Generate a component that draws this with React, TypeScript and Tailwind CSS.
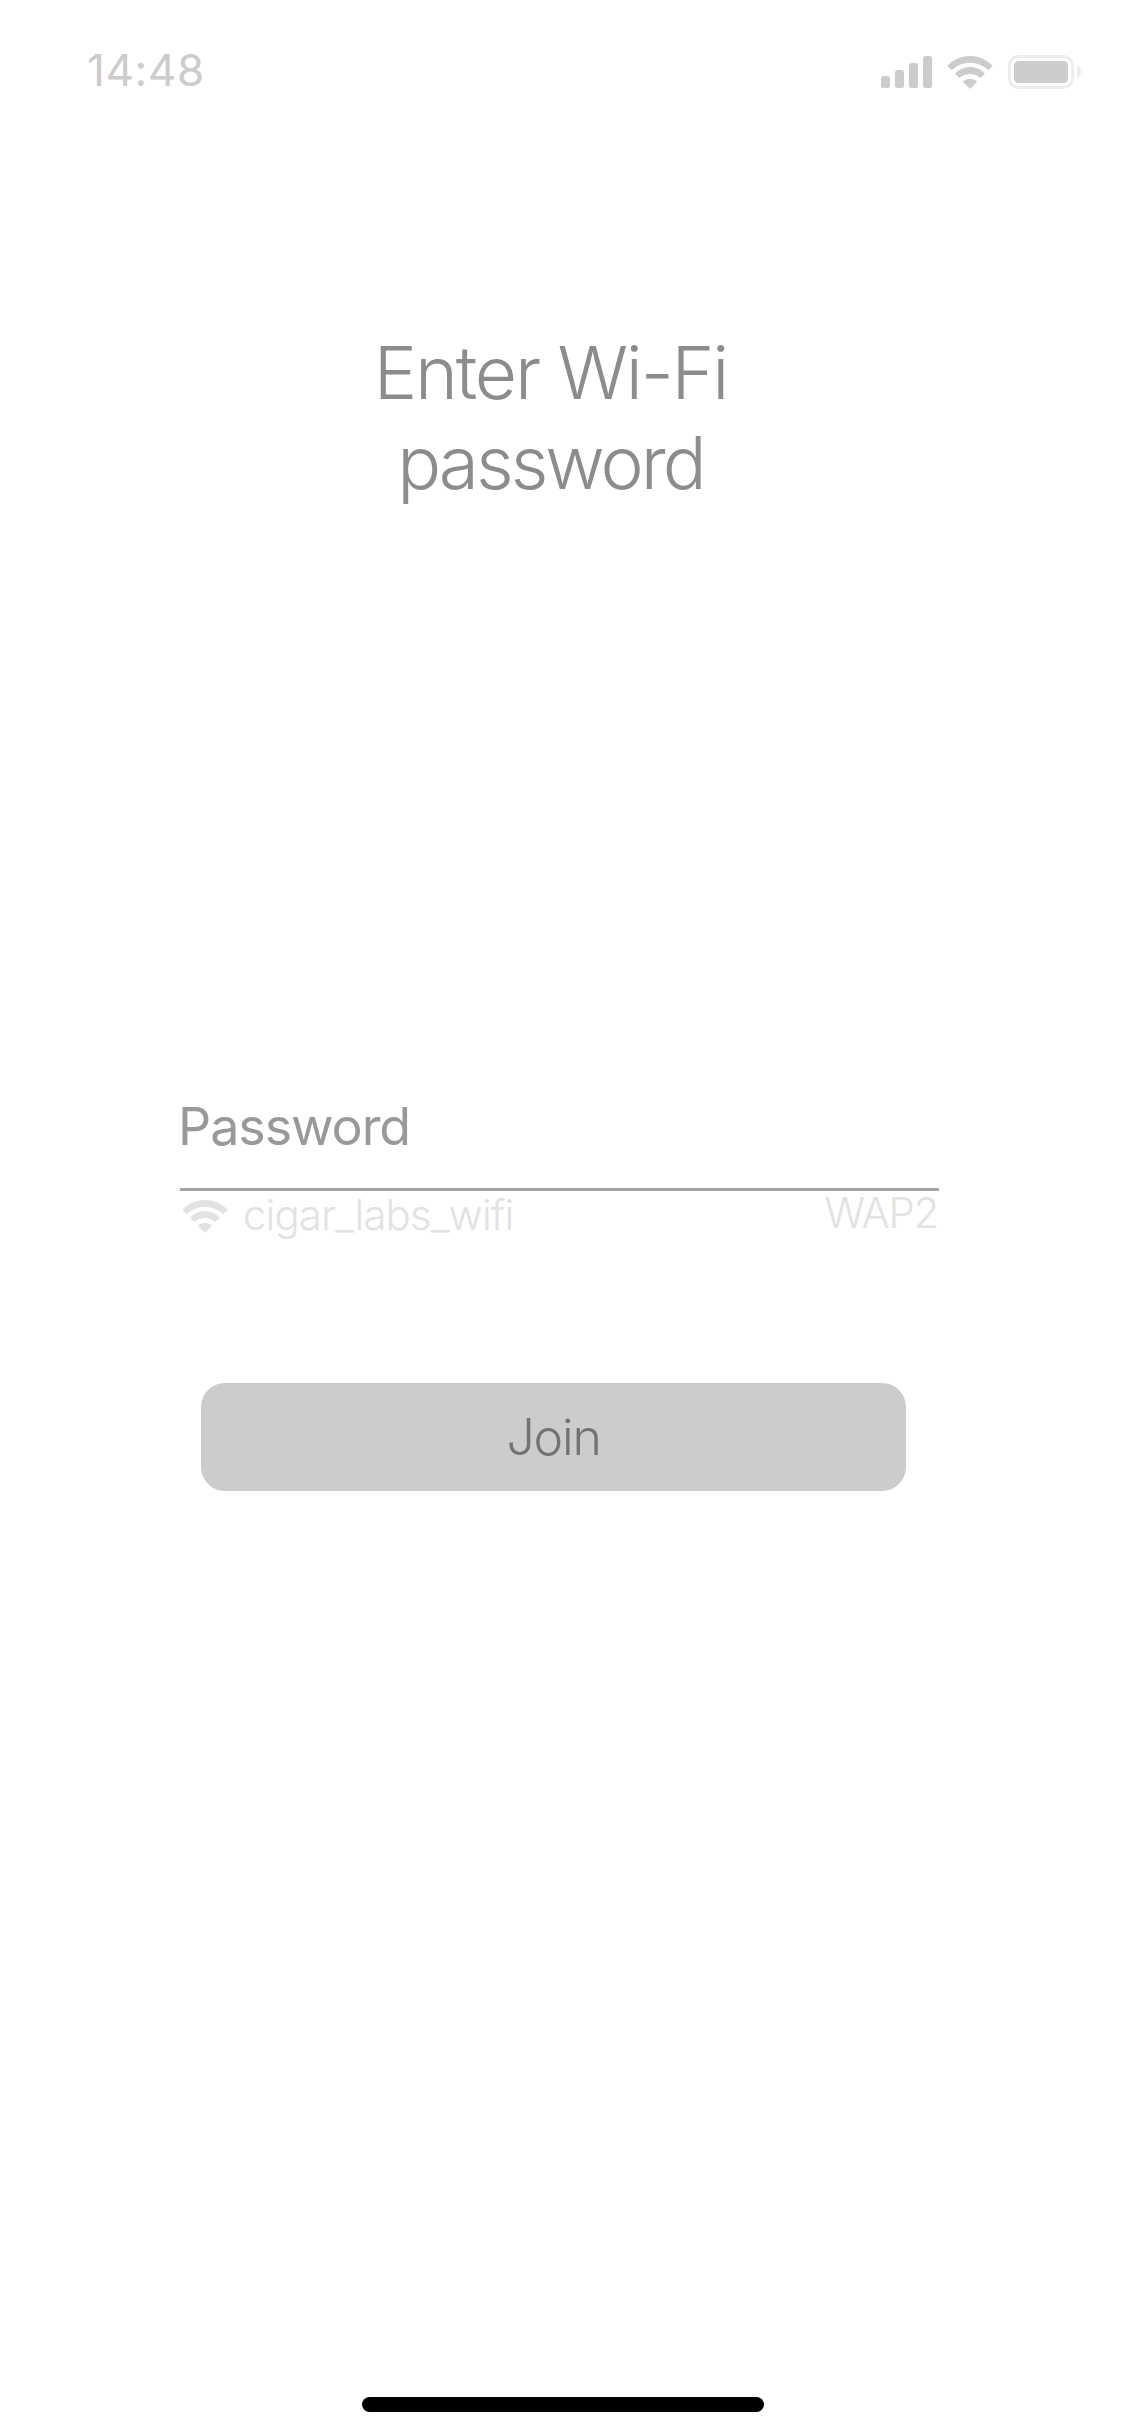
function SignalIcon() {
  return (
    <svg width="51" height="32" viewBox="0 0 51 32" fill="#cccccc">
      <rect x="0" y="20" width="9" height="12" rx="2.8" />
      <rect x="14" y="14" width="9" height="18" rx="2.8" />
      <rect x="28" y="7" width="9" height="25" rx="2.8" />
      <rect x="42" y="0" width="9" height="32" rx="2.8" />
    </svg>
  );
}

function WifiIcon({ color }: { color: string }) {
  return (
    <svg width="46" height="33" viewBox="0 0 46 33" fill={color} stroke={color} strokeWidth="1" strokeLinejoin="round">
      <path d="M0.7 9.7A31.6 31.6 0 0 1 45.3 9.7L41.3 13.7A26.3 26.3 0 0 0 4.7 13.7Z" />
      <path d="M8.6 17.6A20 20 0 0 1 37.4 17.6L33.6 21.4A16.4 16.4 0 0 0 12.4 21.4Z" />
      <path d="M16.3 25.7A11 11 0 0 1 29.7 25.7L23 32.4Z" />
    </svg>
  );
}

function BatteryIcon() {
  return (
    <svg width="73" height="34" viewBox="0 0 73 34">
      <rect x="1.5" y="1.5" width="63" height="31" rx="9" fill="none" stroke="#ededed" strokeWidth="3" />
      <rect x="6" y="6" width="54" height="22" rx="4.5" fill="#cccccc" />
      <path d="M69 10.5C71.5 11.7 73 14 73 16.8C73 19.7 71.5 22 69 23.2Z" fill="#ededed" />
    </svg>
  );
}

export default function App() {
  return (
    <div className="flex h-[2436px] w-[1125px] flex-col bg-white font-['Inter',sans-serif]">
      <header className="flex h-[140px] items-center justify-between pr-[44px] pl-[87px]">
        <span className="text-[44px] leading-[60px] tracking-[0.65px] text-[#cccccc]">14:48</span>
        <div className="flex items-center pt-[4px]">
          <SignalIcon />
          <div className="mr-[15px] ml-[15px]">
            <WifiIcon color="#cccccc" />
          </div>
          <BatteryIcon />
        </div>
      </header>

      <main className="flex flex-1 flex-col">
        <h1 className="mt-[188px] pr-[24px] text-center text-[73px] leading-[90px] font-light text-[#8c8c8c]">
          <span className="block tracking-[-2.16px]">Enter Wi-Fi</span>
          <span className="block tracking-[-2.98px]">password</span>
        </h1>

        <section className="mt-[579px] ml-[180px] w-[759px]">
          <div className="flex h-[104px] items-start border-b-[3px] border-[#a4a4a4] pt-[10px]">
            <label className="-ml-[2px] text-[52px] leading-[60px] tracking-[-1.07px] text-[#999999]">Password</label>
          </div>
          <div className="flex items-start justify-between text-[#e2e2e2]">
            <div className="flex pt-[9px] pl-[2px]">
              <WifiIcon color="#e2e2e2" />
              <span className="mt-[-5px] ml-[15px] text-[42px] leading-[40px] font-light tracking-[-0.91px]">
                cigar_labs_wifi
              </span>
            </div>
            <span className="mt-[2px] pr-[1px] text-[42px] leading-[40px] font-light tracking-[-1.29px]">WAP2</span>
          </div>
        </section>

        <button className="mt-[148px] ml-[201px] h-[108px] w-[705px] rounded-[24px] bg-[#cccccc] text-[50px] leading-[60px] font-light tracking-[-1.22px] text-[#737373]">
          Join
        </button>
      </main>

      <footer className="flex justify-center pb-[24px]">
        <div className="h-[15px] w-[402px] rounded-full bg-black" />
      </footer>
    </div>
  );
}
